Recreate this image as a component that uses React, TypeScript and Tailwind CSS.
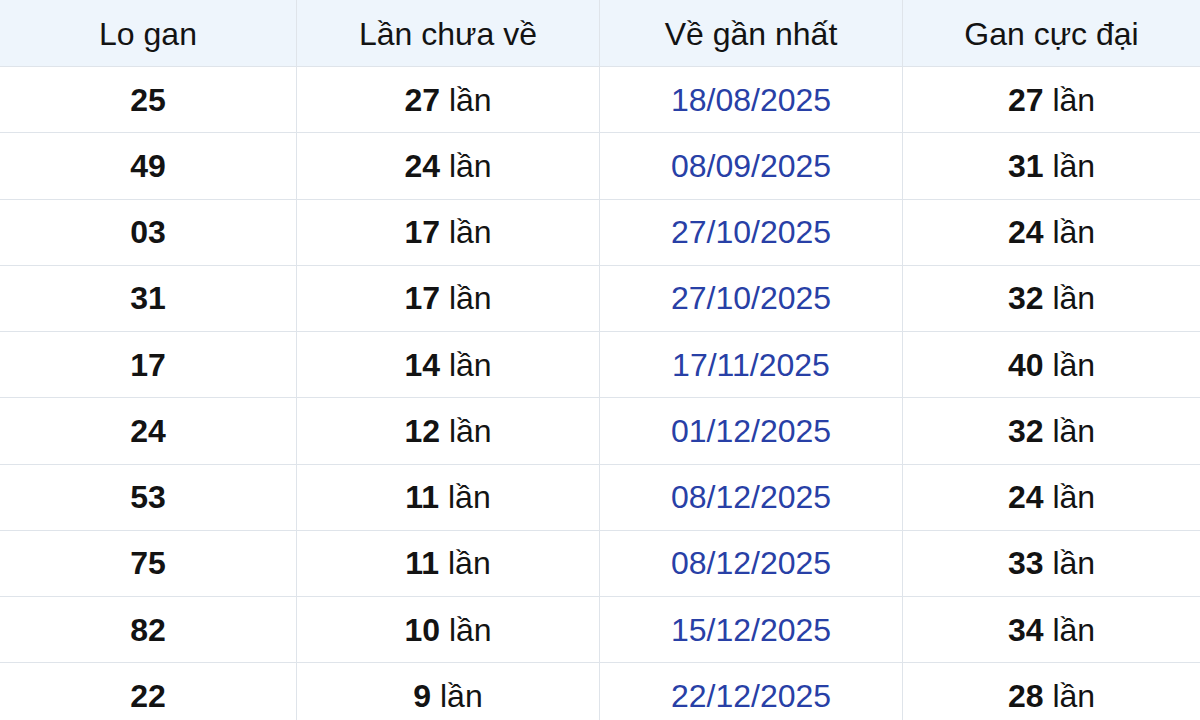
import React from 'react';

const rows = [
  { lo: '25', chua: 27, date: '18/08/2025', max: 27 },
  { lo: '49', chua: 24, date: '08/09/2025', max: 31 },
  { lo: '03', chua: 17, date: '27/10/2025', max: 24 },
  { lo: '31', chua: 17, date: '27/10/2025', max: 32 },
  { lo: '17', chua: 14, date: '17/11/2025', max: 40 },
  { lo: '24', chua: 12, date: '01/12/2025', max: 32 },
  { lo: '53', chua: 11, date: '08/12/2025', max: 24 },
  { lo: '75', chua: 11, date: '08/12/2025', max: 33 },
  { lo: '82', chua: 10, date: '15/12/2025', max: 34 },
  { lo: '22', chua: 9, date: '22/12/2025', max: 28 },
];

const headers = ['Lo gan', 'Lần chưa về', 'Về gần nhất', 'Gan cực đại'];

const cell = 'flex items-center justify-center border-r border-[#dfe4ea] last:border-r-0';

export default function App() {
  return (
    <div className="w-[1200px] h-[720px] overflow-hidden bg-white text-[32px] text-[#131313] font-['Liberation_Sans',Arial,sans-serif]">
      {/* header */}
      <div className="grid grid-cols-[297px_303px_303px_297px] h-[67px] bg-[#eef5fc] border-b border-[#dfe4ea]">
        {headers.map((h) => (
          <div key={h} className={cell + ' pt-[1px]'}>{h}</div>
        ))}
      </div>

      {rows.map((r, i) => (
        <div key={i} className="grid grid-cols-[297px_303px_303px_297px] h-[66.25px] border-b border-[#dfe4ea]">
          <div className={cell}><b className="font-bold">{r.lo}</b></div>
          <div className={cell}><span><b className="font-bold">{r.chua}</b> lần</span></div>
          <div className={cell + ' text-[#2840a6]'}>{r.date}</div>
          <div className={cell}><span><b className="font-bold">{r.max}</b> lần</span></div>
        </div>
      ))}
    </div>
  );
}
